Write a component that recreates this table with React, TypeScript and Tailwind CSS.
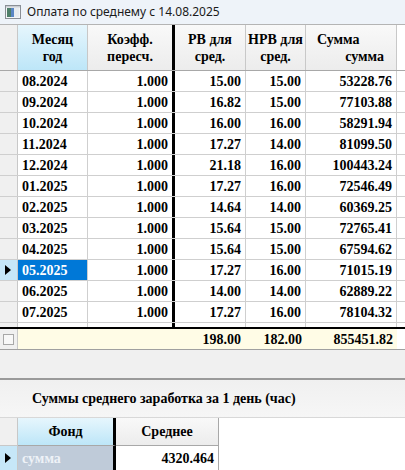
import React from "react";

const rows: [string, string, string, string, string][] = [
  ["08.2024", "1.000", "15.00", "15.00", "53228.76"],
  ["09.2024", "1.000", "16.82", "15.00", "77103.88"],
  ["10.2024", "1.000", "16.00", "16.00", "58291.94"],
  ["11.2024", "1.000", "17.27", "14.00", "81099.50"],
  ["12.2024", "1.000", "21.18", "16.00", "100443.24"],
  ["01.2025", "1.000", "17.27", "16.00", "72546.49"],
  ["02.2025", "1.000", "14.64", "14.00", "60369.25"],
  ["03.2025", "1.000", "15.64", "15.00", "72765.41"],
  ["04.2025", "1.000", "15.64", "15.00", "67594.62"],
  ["05.2025", "1.000", "17.27", "16.00", "71015.19"],
  ["06.2025", "1.000", "14.00", "14.00", "62889.22"],
  ["07.2025", "1.000", "17.27", "16.00", "78104.32"],
];

const serif = { fontFamily: '"Liberation Serif", "Times New Roman", serif' };

function Tri() {
  return (
    <svg width="6" height="10" viewBox="0 0 6 10">
      <path d="M0 0 L6 5 L0 10 Z" fill="#000" />
    </svg>
  );
}

export default function App() {
  return (
    <div className="w-[405px] h-[470px] overflow-hidden bg-white relative" style={serif}>
      {/* title bar */}
      <div className="h-[25px] flex items-center bg-[#eef3f9] border-b border-[#b4b4b4]">
        <svg width="16" height="14" viewBox="0 0 16 14" className="ml-[5px]">
          <rect x="0.5" y="0.5" width="15" height="13" fill="#f4f6f8" stroke="#8a8f96" />
          <rect x="2" y="3" width="4" height="9" fill="#4f7f6a" />
          <rect x="6" y="3" width="3" height="9" fill="#5a86c4" />
          <rect x="9" y="3" width="5" height="9" fill="#e8ecf0" />
          <rect x="1" y="1" width="14" height="1.5" fill="#c8ccd2" />
        </svg>
        <span
          className="ml-[6px] text-[12px] text-[#1a1a1a]"
          style={{ fontFamily: '"Noto Sans", "Open Sans", sans-serif' }}
        >
          Оплата по среднему с 14.08.2025
        </span>
      </div>

      {/* grid */}
      <div className="h-[325px] bg-white border-b border-[#a0a0a0] font-bold text-[14px] text-black">
        {/* header */}
        <div className="flex h-[46px] border-b border-[#a8a8a8] leading-[17px]">
          <div className="w-[18px] bg-[#f0f0f0] border-r border-[#c8c8c8]" />
          <div className="w-[70px] border-r border-[#c8c8c8] bg-gradient-to-b from-[#e6f6fd] to-[#bde6f8] flex flex-col items-center justify-center">
            <span>Месяц</span>
            <span>год</span>
          </div>
          <div className="w-[87px] border-r-[3px] border-black bg-gradient-to-b from-[#f9f9f9] to-[#ececec] flex flex-col items-center justify-center">
            <span>Коэфф.</span>
            <span>пересч.</span>
          </div>
          <div className="w-[71px] border-r border-[#c8c8c8] bg-gradient-to-b from-[#f9f9f9] to-[#ececec] flex flex-col items-center justify-center">
            <span>РВ для</span>
            <span>сред.</span>
          </div>
          <div className="w-[60px] border-r border-[#c8c8c8] bg-gradient-to-b from-[#f9f9f9] to-[#ececec] flex flex-col items-center justify-center">
            <span>НРВ для</span>
            <span>сред.</span>
          </div>
          <div className="w-[91px] border-r border-[#c8c8c8] bg-gradient-to-b from-[#f9f9f9] to-[#ececec] flex flex-col justify-center">
            <span className="pl-[11px]">Сумма</span>
            <span className="self-end pr-[12px]">сумма</span>
          </div>
        </div>

        {rows.map((r, i) => {
          const sel = i === 9;
          return (
            <div key={i} className="flex h-[21px] border-b border-[#cfcfcf]">
              <div
                className={`w-[18px] border-r border-[#c8c8c8] flex items-center pl-[5px] ${
                  sel ? "bg-[#c6e7f8]" : "bg-[#f0f0f0]"
                }`}
              >
                {sel && <Tri />}
              </div>
              <div
                className={`w-[70px] border-r border-[#cfcfcf] flex items-center pl-[4px] ${
                  sel ? "bg-[#0078d7] text-white" : ""
                }`}
              >
                {r[0]}
              </div>
              <div className="w-[87px] border-r-[3px] border-black flex items-center justify-end pr-[4px]">
                {r[1]}
              </div>
              <div className="w-[71px] border-r border-[#cfcfcf] flex items-center justify-end pr-[4px]">
                {r[2]}
              </div>
              <div className="w-[60px] border-r border-[#cfcfcf] flex items-center justify-end pr-[4px]">
                {r[3]}
              </div>
              <div className="w-[91px] border-r border-[#cfcfcf] flex items-center justify-end pr-[4px]">
                {r[4]}
              </div>
            </div>
          );
        })}
        {/* partial blank row */}
        <div className="flex h-[4px]">
          <div className="w-[18px] bg-[#f0f0f0] border-r border-[#c8c8c8]" />
          <div className="w-[70px] border-r border-[#cfcfcf]" />
          <div className="w-[87px] border-r-[3px] border-black" />
          <div className="w-[71px] border-r border-[#cfcfcf]" />
          <div className="w-[60px] border-r border-[#cfcfcf]" />
          <div className="w-[91px] border-r border-[#cfcfcf]" />
        </div>
        {/* footer */}
        <div className="flex h-[22px] border-t-2 border-black">
          <div className="w-[18px] bg-[#f0f0f0] border-r border-[#c8c8c8] flex items-center pl-[3px]">
            <div className="w-[11px] h-[11px] bg-[#f8f8f8] border border-[#a8a8a8]" />
          </div>
          <div className="w-[379px] bg-[#fffce6] flex">
            <div className="w-[157px]" />
            <div className="w-[71px] flex items-center justify-end pr-[5px]">198.00</div>
            <div className="w-[60px] flex items-center justify-end pr-[4px]">182.00</div>
            <div className="w-[91px] flex items-center justify-end pr-[4px]">855451.82</div>
          </div>
        </div>
      </div>

      {/* gray spacer */}
      <div className="h-[30px] bg-[#f0f0f0] border-b-2 border-[#9a9a9a]" />

      {/* lower panel */}
      <div className="h-[38px] bg-gradient-to-b from-[#f0f0f0] to-[#f6f6f6] flex items-center pl-[32px] font-bold text-[14px] text-black border-b border-[#d8d8d8]">
        Суммы среднего заработка за 1 день (час)
      </div>
      <div className="bg-white font-bold text-[14px] text-black">
        <div className="flex h-[28px]">
          <div className="w-[18px] bg-[#f0f0f0] border-r border-b border-[#c8c8c8]" />
          <div className="w-[98px] border-r-[3px] border-r-black border-b border-b-[#a8a8a8] bg-gradient-to-b from-[#e6f6fd] to-[#bde6f8] flex items-center justify-center">
            Фонд
          </div>
          <div className="w-[103px] border-r border-b border-[#a8a8a8] bg-gradient-to-b from-[#f9f9f9] to-[#ececec] flex items-center justify-center">
            Среднее
          </div>
        </div>
        <div className="flex h-[24px]">
          <div className="w-[18px] bg-[#c6e7f8] border-r border-[#c8c8c8] flex items-center pl-[5px]">
            <Tri />
          </div>
          <div className="w-[98px] border-r-[3px] border-black bg-[#bfcbd9] text-[#eef2f7] flex items-center pl-[4px]">
            сумма
          </div>
          <div className="w-[103px] border-r border-[#a8a8a8] flex items-center justify-end pr-[4px]">
            4320.464
          </div>
        </div>
      </div>
    </div>
  );
}
